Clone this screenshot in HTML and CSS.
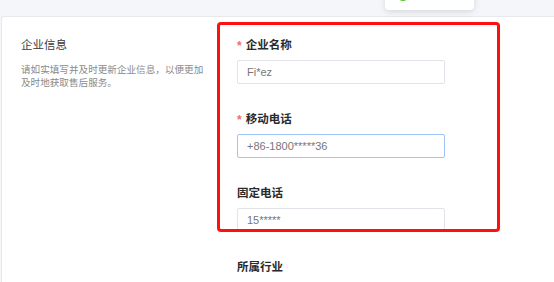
FILE: index.html
```html
<!DOCTYPE html>
<html lang="zh-CN">
<head>
<meta charset="utf-8">
<title>企业信息</title>
<link rel="stylesheet" href="styles.css">
</head>
<body>
<div class="page">
  <div class="toast"><span class="toast-icon"></span></div>
  <div class="card">
    <div class="intro">
      <div class="intro-title">企业信息</div>
      <div class="intro-desc">请如实填写并及时更新企业信息，以便更加及时地获取售后服务。</div>
    </div>
    <div class="form">
      <div class="item">
        <div class="label"><span class="req">*</span>企业名称</div>
        <div class="input">Fi*ez</div>
      </div>
      <div class="item">
        <div class="label"><span class="req">*</span>移动电话</div>
        <div class="input focus">+86-1800*****36</div>
      </div>
      <div class="item">
        <div class="label">固定电话</div>
        <div class="input">15*****</div>
      </div>
      <div class="item">
        <div class="label">所属行业</div>
      </div>
    </div>
  </div>
  <div class="highlight"></div>
</div>
</body>
</html>
```
FILE: styles.css
```css
html, body {
  margin: 0;
  padding: 0;
}
body {
  background: #f5f6f9;
  font-family: "Liberation Sans", "Noto Sans CJK SC", sans-serif;
  width: 554px;
  height: 282px;
  overflow: hidden;
}
.page {
  position: relative;
  height: 282px;
  padding-top: 16px;
  box-sizing: border-box;
  overflow: hidden;
}
.card {
  margin-left: 1px;
  background: #ffffff;
  border: 1px solid #e6e8ec;
  border-right: none;
  border-bottom: none;
  border-radius: 3px 0 0 0;
  height: 266px;
  display: flex;
  box-sizing: border-box;
  overflow: hidden;
}
.intro {
  width: 235px;
  padding: 20px 0 0 19px;
  box-sizing: border-box;
}
.intro-title {
  font-size: 11.5px;
  line-height: 16px;
  height: 16px;
  color: #3a3a3a;
}
.intro-desc {
  margin-top: 10px;
  width: 190px;
  font-size: 9.6px;
  line-height: 13px;
  color: #8a8a8a;
}
.form {
  padding-top: 20px;
  width: 208px;
}
.item {
  margin-bottom: 27px;
}
.label {
  font-size: 11.5px;
  line-height: 16px;
  height: 16px;
  font-weight: bold;
  color: #2b2b2b;
  margin-bottom: 7px;
  display: flex;
  align-items: center;
  overflow: visible;
}
.req {
  color: #f56c6c;
  font-size: 12px;
  line-height: 1;
  margin-right: 4px;
  position: relative;
  top: 1px;
}
.input {
  height: 24px;
  box-sizing: border-box;
  border: 1px solid #e1e3e8;
  border-radius: 2px;
  padding-left: 9px;
  font-size: 11px;
  line-height: 22px;
  color: #777777;
  background: #ffffff;
}
.input.focus {
  border-color: #9ec3f7;
}
.toast {
  position: absolute;
  left: 385px;
  top: -10px;
  width: 89px;
  height: 20px;
  background: #ffffff;
  border-radius: 0 0 4px 4px;
  box-shadow: 0 2px 6px rgba(0, 0, 0, 0.12);
  z-index: 2;
  overflow: hidden;
}
.toast-icon {
  position: absolute;
  left: 12px;
  top: -1px;
  width: 12px;
  height: 12px;
  border-radius: 50%;
  background: #52c41a;
}
.highlight {
  position: absolute;
  left: 217px;
  top: 22px;
  width: 283px;
  height: 210px;
  box-sizing: border-box;
  border: 3px solid #ff1010;
  border-radius: 4px;
  z-index: 3;
}
```
